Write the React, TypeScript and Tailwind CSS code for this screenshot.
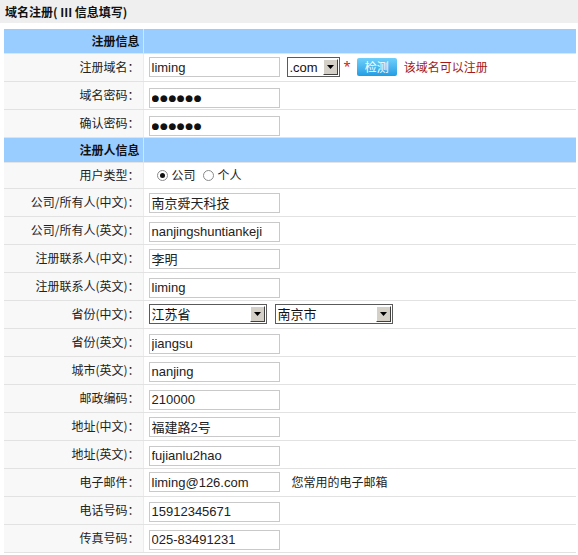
import React from 'react';

type Row =
  | { kind: 'section'; title: string; h: string }
  | { kind: 'field'; label: string; content: React.ReactNode; short?: boolean };

const cjk = "font-['Noto_Sans_CJK_SC',sans-serif]";
const latin = "font-['Liberation_Sans','Noto_Sans_CJK_SC',sans-serif]";

function TextBox({ value }: { value: string }) {
  return (
    <input
      readOnly
      type="text"
      value={value}
      className={`h-[20px] w-[131px] border border-[#c9c9c9] bg-white px-[2px] text-[13px] text-[#222] outline-none ${latin}`}
    />
  );
}

function PasswordBox() {
  return (
    <input
      readOnly
      type="text"
      value="●●●●●●"
      className="h-[20px] w-[131px] border border-[#c9c9c9] bg-white px-[2px] font-['DejaVu_Sans',sans-serif] text-[9px] tracking-[0.6px] text-[#111] outline-none"
    />
  );
}

function ClassicSelect({ value, width }: { value: string; width: string }) {
  return (
    <div
      className={`flex h-[20px] items-center justify-between border border-[#5a5a5a] bg-white pl-[2px] pr-[1px] ${width}`}
    >
      <span className={`text-[13px] leading-none text-[#111] ${latin}`}>{value}</span>
      <span className="flex h-[16px] w-[15px] items-center justify-center border border-t-white border-l-white border-r-[#404040] border-b-[#404040] bg-[#d4d0c8]">
        <svg width="7" height="4" viewBox="0 0 7 4">
          <path d="M0 0h7L3.5 4z" fill="#000" />
        </svg>
      </span>
    </div>
  );
}

function Radio({ checked, label }: { checked?: boolean; label: string }) {
  return (
    <span className="flex items-center gap-[4px]">
      <span className="flex h-[11px] w-[11px] items-center justify-center rounded-full border border-[#8a8a8a] bg-white">
        {checked && <span className="h-[5px] w-[5px] rounded-full bg-[#111]" />}
      </span>
      <span className={`text-[12px] text-[#222] ${cjk}`}>{label}</span>
    </span>
  );
}

const rows: Row[] = [
  { kind: 'section', title: '注册信息', h: 'h-[24px]' },
  {
    kind: 'field',
    label: '注册域名：',
    content: (
      <div className="flex items-center">
        <TextBox value="liming" />
        <div className="ml-[7px]">
          <ClassicSelect value=".com" width="w-[53px]" />
        </div>
        <span className="ml-[4px] text-[13px] text-[#cc2222]">*</span>
        <span
          className={`ml-[6px] flex h-[18px] w-[40px] items-center justify-center rounded-[2px] bg-gradient-to-b from-[#6fd0fa] to-[#1d9de3] text-[12px] text-white ${cjk}`}
        >
          检测
        </span>
        <span className={`ml-[7px] text-[12px] text-[#a31a1a] ${cjk}`}>该域名可以注册</span>
      </div>
    ),
  },
  { kind: 'field', label: '域名密码：', content: <PasswordBox /> },
  { kind: 'field', label: '确认密码：', content: <PasswordBox /> },
  { kind: 'section', title: '注册人信息', h: 'h-[25px]' },
  {
    kind: 'field',
    label: '用户类型：',
    short: true,
    content: (
      <div className="flex items-center gap-[7px] pl-[8px]">
        <Radio checked label="公司" />
        <Radio label="个人" />
      </div>
    ),
  },
  { kind: 'field', label: '公司/所有人(中文)：', content: <TextBox value="南京舜天科技" /> },
  { kind: 'field', label: '公司/所有人(英文)：', content: <TextBox value="nanjingshuntiankeji" /> },
  { kind: 'field', label: '注册联系人(中文)：', content: <TextBox value="李明" /> },
  { kind: 'field', label: '注册联系人(英文)：', content: <TextBox value="liming" /> },
  {
    kind: 'field',
    label: '省份(中文)：',
    content: (
      <div className="flex items-center gap-[8px]">
        <ClassicSelect value="江苏省" width="w-[118px]" />
        <ClassicSelect value="南京市" width="w-[118px]" />
      </div>
    ),
  },
  { kind: 'field', label: '省份(英文)：', content: <TextBox value="jiangsu" /> },
  { kind: 'field', label: '城市(英文)：', content: <TextBox value="nanjing" /> },
  { kind: 'field', label: '邮政编码：', content: <TextBox value="210000" /> },
  { kind: 'field', label: '地址(中文)：', content: <TextBox value="福建路2号" /> },
  { kind: 'field', label: '地址(英文)：', content: <TextBox value="fujianlu2hao" /> },
  {
    kind: 'field',
    label: '电子邮件：',
    content: (
      <div className="flex items-center">
        <TextBox value="liming@126.com" />
        <span className={`ml-[12px] text-[12px] text-[#222] ${cjk}`}>您常用的电子邮箱</span>
      </div>
    ),
  },
  { kind: 'field', label: '电话号码：', content: <TextBox value="15912345671" /> },
  { kind: 'field', label: '传真号码：', content: <TextBox value="025-83491231" /> },
];

export default function App() {
  return (
    <div className="h-[555px] w-[578px] overflow-hidden bg-white">
      <div className={`flex h-[23px] items-center bg-[#efefef] pl-[5px] text-[12px] font-bold text-[#111] ${cjk}`}>
        域名注册( III 信息填写)
      </div>
      <table className="mt-[6px] ml-[4px] w-[572px] border-collapse">
        <tbody>
          {rows.map((row, i) =>
            row.kind === 'section' ? (
              <tr key={i} className="bg-[#99ccff]">
                <td
                  className={`${row.h} w-[139px] border-r border-r-[#cfe6ff] border-b border-b-[#e4e4e4] pr-[3px] text-right text-[12px] font-bold text-[#111] ${cjk}`}
                >
                  {row.title}
                </td>
                <td className="border-b border-b-[#e4e4e4]" />
              </tr>
            ) : (
              <tr key={i}>
                <td
                  className={`${row.short ? 'h-[26px]' : 'h-[28px]'} w-[139px] border-r border-r-[#ececec] border-b border-b-[#e2e2e2] bg-[#f8f8f8] pr-[3px] text-right text-[12px] text-[#222] ${cjk}`}
                >
                  {row.label}
                </td>
                <td className="border-b border-b-[#e2e2e2] pl-[5px]">{row.content}</td>
              </tr>
            )
          )}
        </tbody>
      </table>
    </div>
  );
}
